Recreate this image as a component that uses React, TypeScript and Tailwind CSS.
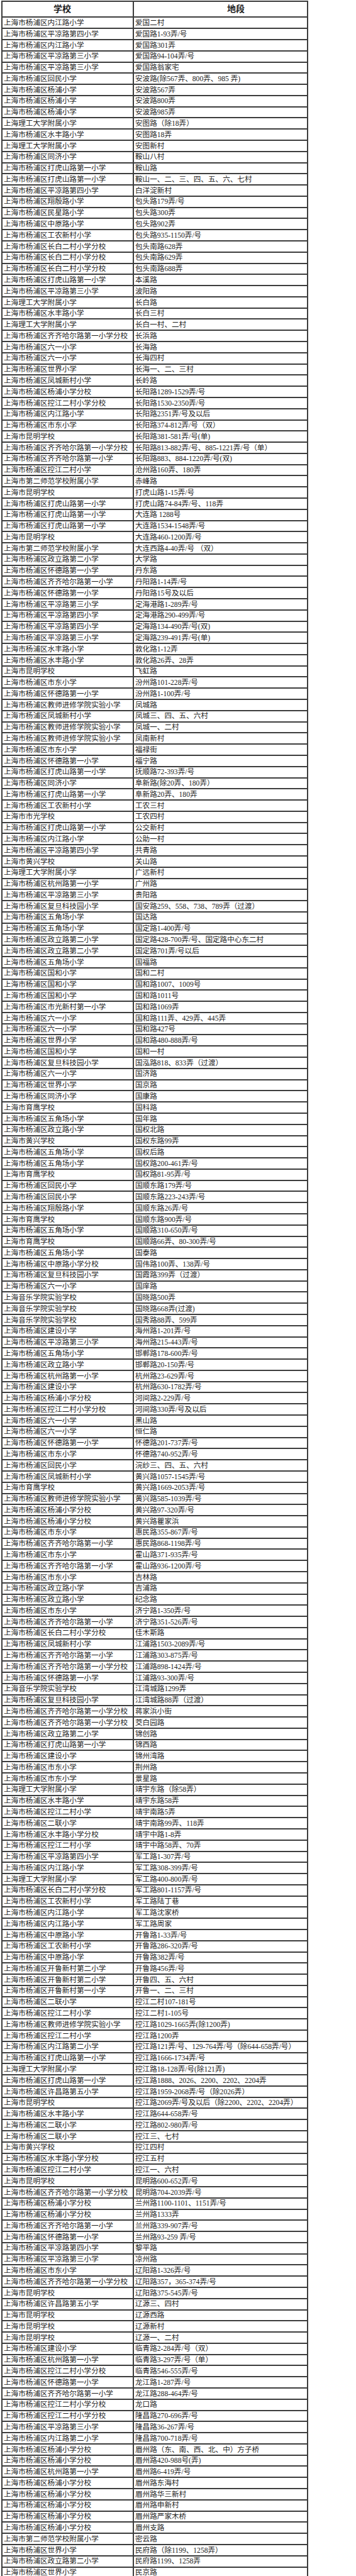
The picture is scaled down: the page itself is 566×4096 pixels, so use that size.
const raw = `上海市杨浦区内江路小学|爱国二村
上海市杨浦区平凉路第四小学|爱国路1-93弄/号
上海市杨浦区内江路小学|爱国路301弄
上海市杨浦区平凉路第三小学|爱国路94-104弄/号
上海市杨浦区平凉路第三小学|爱国路翁家宅
上海市杨浦区回民小学|安波路(除567弄、800弄、985 弄)
上海市杨浦区杨浦小学|安波路567弄
上海市杨浦区杨浦小学|安波路800弄
上海市杨浦区杨浦小学|安波路985弄
上海理工大学附属小学|安图路（除18弄）
上海市杨浦区水丰路小学|安图路18弄
上海理工大学附属小学|安图新村
上海市杨浦区同济小学|鞍山八村
上海市杨浦区打虎山路第一小学|鞍山路
上海市杨浦区打虎山路第一小学|鞍山一、二、三、四、五、六、七村
上海市杨浦区平凉路第四小学|白洋淀新村
上海市杨浦区翔殷路小学|包头路179弄/号
上海市杨浦区民星路小学|包头路300弄
上海市杨浦区中原路小学|包头路902弄
上海市杨浦区工农新村小学|包头路935-1150弄/号
上海市杨浦区长白二村小学分校|包头南路628弄
上海市杨浦区长白二村小学分校|包头南路629弄
上海市杨浦区长白二村小学分校|包头南路688弄
上海市杨浦区打虎山路第一小学|本溪路
上海市杨浦区平凉路第三小学|波阳路
上海理工大学附属小学|长白路
上海市杨浦区水丰路小学|长白三村
上海理工大学附属小学|长白一村、二村
上海市杨浦区齐齐哈尔路第一小学分校|长浜路
上海市杨浦区六一小学|长海路
上海市杨浦区六一小学|长海四村
上海市杨浦区世界小学|长海一、二、三村
上海市杨浦区凤城新村小学|长岭路
上海市杨浦区杨浦小学分校|长阳路1289-1529弄/号
上海市杨浦区控江二村小学分校|长阳路1530-2350弄/号
上海市杨浦区内江路小学|长阳路2351弄/号及以后
上海市杨浦区市东小学|长阳路374-812弄/号（双）
上海市昆明学校|长阳路381-581弄/号(单)
上海市杨浦区齐齐哈尔路第一小学分校|长阳路813-882弄/号、885-1221弄/号（单）
上海市杨浦区齐齐哈尔路第一小学|长阳路883、884-1220弄/号(双)
上海市杨浦区控江二村小学|沧州路160弄、180弄
上海市第二师范学校附属小学|赤峰路
上海市昆明学校|打虎山路1-15弄/号
上海市杨浦区打虎山路第一小学|打虎山路74-84弄/号、118弄
上海市杨浦区打虎山路第一小学|大连路 1288号
上海市杨浦区打虎山路第一小学|大连路1534-1548弄/号
上海市昆明学校|大连路460-1200弄/号
上海市第二师范学校附属小学|大连西路4-40弄/号 （双）
上海市杨浦区政立路第二小学|大学路
上海市杨浦区怀德路第一小学|丹东路
上海市杨浦区齐齐哈尔路第一小学|丹阳路1-14弄/号
上海市杨浦区怀德路第一小学|丹阳路15号及以后
上海市杨浦区平凉路第三小学|定海港路1-289弄/号
上海市杨浦区平凉路第四小学|定海港路290-499弄/号
上海市杨浦区平凉路第四小学|定海路134-490弄/号(双)
上海市杨浦区平凉路第三小学|定海路239-491弄/号(单)
上海市杨浦区水丰路小学|敦化路1-12弄
上海市杨浦区水丰路小学|敦化路26弄、28弄
上海市昆明学校|飞虹路
上海市杨浦区市东小学|汾州路101-228弄/号
上海市杨浦区怀德路第一小学|汾州路1-100弄/号
上海市杨浦区教师进修学院实验小学|凤城路
上海市杨浦区凤城新村小学|凤城三、四、五、六村
上海市杨浦区教师进修学院实验小学|凤城一、二村
上海市杨浦区教师进修学院实验小学|凤南新村
上海市杨浦区市东小学|福禄街
上海市杨浦区怀德路第一小学|福宁路
上海市杨浦区打虎山路第一小学|抚顺路72-393弄/号
上海市杨浦区同济小学|阜新路(除20弄、180弄）
上海市杨浦区打虎山路第一小学|阜新路20弄、180弄
上海市杨浦区工农新村小学|工农三村
上海市市光学校|工农四村
上海市杨浦区打虎山路第一小学|公交新村
上海市杨浦区内江路小学|公助一村
上海市杨浦区平凉路第四小学|共青路
上海市黄兴学校|关山路
上海理工大学附属小学|广远新村
上海市杨浦区杭州路第一小学|广州路
上海市杨浦区平凉路第三小学|贵阳路
上海市杨浦区复旦科技园小学|国安路259、558、738、789弄（过渡）
上海市杨浦区五角场小学|国达路
上海市杨浦区五角场小学|国定路1-400弄/号
上海市杨浦区政立路第二小学|国定路428-700弄/号、国定路中心东二村
上海市杨浦区政立路第二小学|国定路701弄/号以后
上海市杨浦区五角场小学|国福路
上海市杨浦区国和小学|国和二村
上海市杨浦区国和小学|国和路1007、1009号
上海市杨浦区国和小学|国和路1011号
上海市杨浦区市光新村第一小学|国和路1069弄
上海市杨浦区六一小学|国和路111弄、429弄、445弄
上海市杨浦区六一小学|国和路427号
上海市杨浦区世界小学|国和路480-888弄/号
上海市杨浦区国和小学|国和一村
上海市杨浦区复旦科技园小学|国泓路818、833弄（过渡）
上海市杨浦区六一小学|国济路
上海市杨浦区世界小学|国京路
上海市杨浦区同济小学|国康路
上海市育鹰学校|国科路
上海市杨浦区五角场小学|国年路
上海市杨浦区政立路小学|国权北路
上海市黄兴学校|国权东路99弄
上海市杨浦区五角场小学|国权后路
上海市杨浦区五角场小学|国权路200-461弄/号
上海市育鹰学校|国权路81-95弄/号
上海市杨浦区回民小学|国顺东路179弄/号
上海市杨浦区回民小学|国顺东路223-243弄/号
上海市杨浦区翔殷路小学|国顺东路26弄/号
上海市育鹰学校|国顺东路900弄/号
上海市杨浦区五角场小学|国顺路310-650弄/号
上海市育鹰学校|国顺路66弄、80-300弄/号
上海市杨浦区五角场小学|国泰路
上海市杨浦区中原路小学分校|国伟路100弄、138弄/号
上海市杨浦区复旦科技园小学|国霞路399弄（过渡）
上海市杨浦区六一小学|国庠路
上海音乐学院实验学校|国晓路500弄
上海音乐学院实验学校|国晓路668弄(过渡)
上海音乐学院实验学校|国秀路88弄、599弄
上海市杨浦区建设小学|海州路1-201弄/号
上海市杨浦区平凉路第三小学|海州路215-443弄/号
上海市杨浦区五角场小学|邯郸路178-600弄/号
上海市杨浦区政立路小学|邯郸路20-150弄/号
上海市杨浦区杭州路第一小学|杭州路23-629弄/号
上海市杨浦区建设小学|杭州路630-1782弄/号
上海市杨浦区杨浦小学分校|河间路2-229弄/号
上海市杨浦区控江二村小学分校|河间路330弄/号及以后
上海市杨浦区六一小学|黑山路
上海市杨浦区六一小学|恒仁路
上海市杨浦区怀德路第一小学|怀德路201-737弄/号
上海市杨浦区市东小学|怀德路740-952弄/号
上海市杨浦区回民小学|浣纱三、四、五、六村
上海市杨浦区凤城新村小学|黄兴路1057-1545弄/号
上海市育鹰学校|黄兴路1669-2053弄/号
上海市杨浦区教师进修学院实验小学|黄兴路585-1039弄/号
上海市杨浦区杨浦小学分校|黄兴路97-320弄/号
上海市杨浦区杨浦小学分校|黄兴路瞿家浜
上海市杨浦区市东小学|惠民路355-867弄/号
上海市杨浦区齐齐哈尔路第一小学|惠民路868-1198弄/号
上海市杨浦区市东小学|霍山路371-935弄/号
上海市杨浦区齐齐哈尔路第一小学|霍山路936-1200弄/号
上海市杨浦区市东小学|吉林路
上海市杨浦区政立路小学|吉浦路
上海市杨浦区政立路小学|纪念路
上海市杨浦区市东小学|济宁路1-350弄/号
上海市杨浦区齐齐哈尔路第一小学|济宁路351-526弄/号
上海市杨浦区长白二村小学分校|佳木斯路
上海市杨浦区凤城新村小学|江浦路1503-2089弄/号
上海市杨浦区齐齐哈尔路第一小学|江浦路303-875弄/号
上海市杨浦区齐齐哈尔路第一小学分校|江浦路898-1424弄/号
上海市杨浦区怀德路第一小学|江浦路93-300弄/号
上海音乐学院实验学校|江湾城路1299弄
上海市杨浦区复旦科技园小学|江湾城路88弄（过渡）
上海市杨浦区齐齐哈尔路第一小学分校|蒋家浜小街
上海市杨浦区齐齐哈尔路第一小学分校|茭白园路
上海市杨浦区政立路第二小学|锦创路
上海市杨浦区打虎山路第一小学|锦西路
上海市杨浦区建设小学|锦州湾路
上海市杨浦区市东小学|荆州路
上海市杨浦区市东小学|景星路
上海理工大学附属小学|靖宇东路（除58弄）
上海市杨浦区水丰路小学|靖宇东路58弄
上海市杨浦区控江二村小学|靖宇南路5弄
上海市杨浦区二联小学|靖宇南路99弄、118弄
上海市杨浦区水丰路小学分校|靖宇中路1-8弄
上海市杨浦区控江二村小学|靖宇中路58弄、70弄
上海市杨浦区平凉路第四小学|军工路1-307弄/号
上海市杨浦区内江路小学|军工路308-399弄/号
上海理工大学附属小学|军工路400-800弄/号
上海市杨浦区长白二村小学分校|军工路801-1157弄/号
上海市杨浦区工农新村小学|军工路陆丁巷
上海市杨浦区内江路小学|军工路沈家桥
上海市杨浦区内江路小学|军工路周家
上海市杨浦区中原路小学|开鲁路1-33弄/号
上海市杨浦区工农新村小学|开鲁路286-320弄/号
上海市杨浦区中原路小学|开鲁路382弄/号
上海市杨浦区开鲁新村第二小学|开鲁路456弄/号
上海市杨浦区开鲁新村第二小学|开鲁四、五、六村
上海市杨浦区开鲁新村第一小学|开鲁一、二、三村
上海市杨浦区二联小学|控江二村107-181号
上海市杨浦区控江二村小学|控江二村1-105号
上海市杨浦区教师进修学院实验小学|控江路1029-1665弄(除1200弄)
上海市杨浦区控江二村小学|控江路1200弄
上海市杨浦区内江路第二小学|控江路121弄/号、129-764弄/号（除644-658弄/号）
上海市杨浦区打虎山路第一小学|控江路1666-1734弄/号
上海理工大学附属小学|控江路18-128弄/号(除121弄)
上海市杨浦区打虎山路第一小学|控江路1888、2026、2200、2202、2204弄
上海市杨浦区许昌路第五小学|控江路1959-2068弄/号（除2026弄）
上海市昆明学校|控江路2069弄/号及以后（除2200、2202、2204弄）
上海市杨浦区水丰路小学|控江路644-658弄/号
上海市杨浦区二联小学|控江路802-980弄/号
上海市杨浦区二联小学|控江三、七村
上海市黄兴学校|控江四村
上海市杨浦区水丰路小学分校|控江五村
上海市杨浦区控江二村小学|控江一、六村
上海市昆明学校|昆明路600-652弄/号
上海市杨浦区齐齐哈尔路第一小学分校|昆明路704-2039弄/号
上海市杨浦区杨浦小学分校|兰州路1100-1101、1151弄/号
上海市杨浦区杨浦小学分校|兰州路1333弄
上海市杨浦区齐齐哈尔路第一小学|兰州路339-907弄/号
上海市杨浦区怀德路第一小学|兰州路93-259 弄/号
上海市杨浦区平凉路第四小学|黎平路
上海市杨浦区平凉路第三小学|凉州路
上海市杨浦区市东小学|辽阳路1-326弄/号
上海市杨浦区齐齐哈尔路第一小学分校|辽阳路357，365-374弄/号
上海市昆明学校|辽阳路375-545弄/号
上海市杨浦区许昌路第五小学|辽源三、四村
上海市昆明学校|辽源西路
上海市昆明学校|辽源新村
上海市昆明学校|辽源一、二村
上海市杨浦区建设小学|临青路2-284弄/号（双）
上海市杨浦区杭州路第一小学|临青路3-297弄/号（单）
上海市杨浦区控江二村小学分校|临青路546-555弄/号
上海市杨浦区怀德路第一小学|龙江路1-287弄/号
上海市杨浦区齐齐哈尔路第一小学|龙江路288-464弄/号
上海市杨浦区控江二村小学分校|龙口路
上海市杨浦区控江二村小学分校|隆昌路270-696弄/号
上海市杨浦区平凉路第三小学|隆昌路36-267弄/号
上海市杨浦区内江路第二小学|隆昌路700-718弄/号
上海市杨浦区杨浦小学分校|眉州路（东、南、西、北、中）方子桥
上海市杨浦区杨浦小学分校|眉州路420-988号(弄)
上海市杨浦区杭州路第一小学|眉州路6-419弄/号
上海市杨浦区杨浦小学分校|眉州路东海村
上海市杨浦区杨浦小学分校|眉州路华三新村
上海市杨浦区杨浦小学分校|眉州路申新村
上海市杨浦区杨浦小学分校|眉州路严家木桥
上海市杨浦区杨浦小学分校|眉州支路
上海市第二师范学校附属小学|密云路
上海市杨浦区世界小学|民府路（除1199、1258弄）
上海市杨浦区政立路第二小学|民府路1199、1258弄
上海市杨浦区世界小学|民京路`;

const rows = raw.split("\n").map((line) => line.split("|"));

const font = { fontFamily: '"Liberation Serif", "Noto Sans CJK SC", serif' };

export default function App() {
  return (
    <div className="w-[566px] bg-white pt-[1px]" style={font}>
      <div className="ml-[2px] w-[488px] border-t-2 border-l-2 border-r-2 border-[#3c3c3c] text-[#1e1e1e]">
        {/* 表头 */}
        <div className="flex h-[25.4px] border-b-2 border-[#3c3c3c] text-[14px] font-bold">
          <div className="flex w-[209px] items-center border-r-2 border-[#3c3c3c] pl-[81px]">学校</div>
          <div className="flex flex-1 items-center pl-[148px]">地段</div>
        </div>

        {rows.map(([school, area], i) => (
          <div
            key={i}
            className="flex h-[17.79px] border-b-2 border-[#3c3c3c] text-[11.6px] leading-none"
          >
            <div className="flex w-[209px] items-center whitespace-nowrap border-r-2 border-[#3c3c3c] pl-[2px] pt-[1px]">
              {school}
            </div>
            <div className="flex flex-1 items-center whitespace-nowrap pl-[2px] pt-[1px]">{area}</div>
          </div>
        ))}
      </div>
    </div>
  );
}
